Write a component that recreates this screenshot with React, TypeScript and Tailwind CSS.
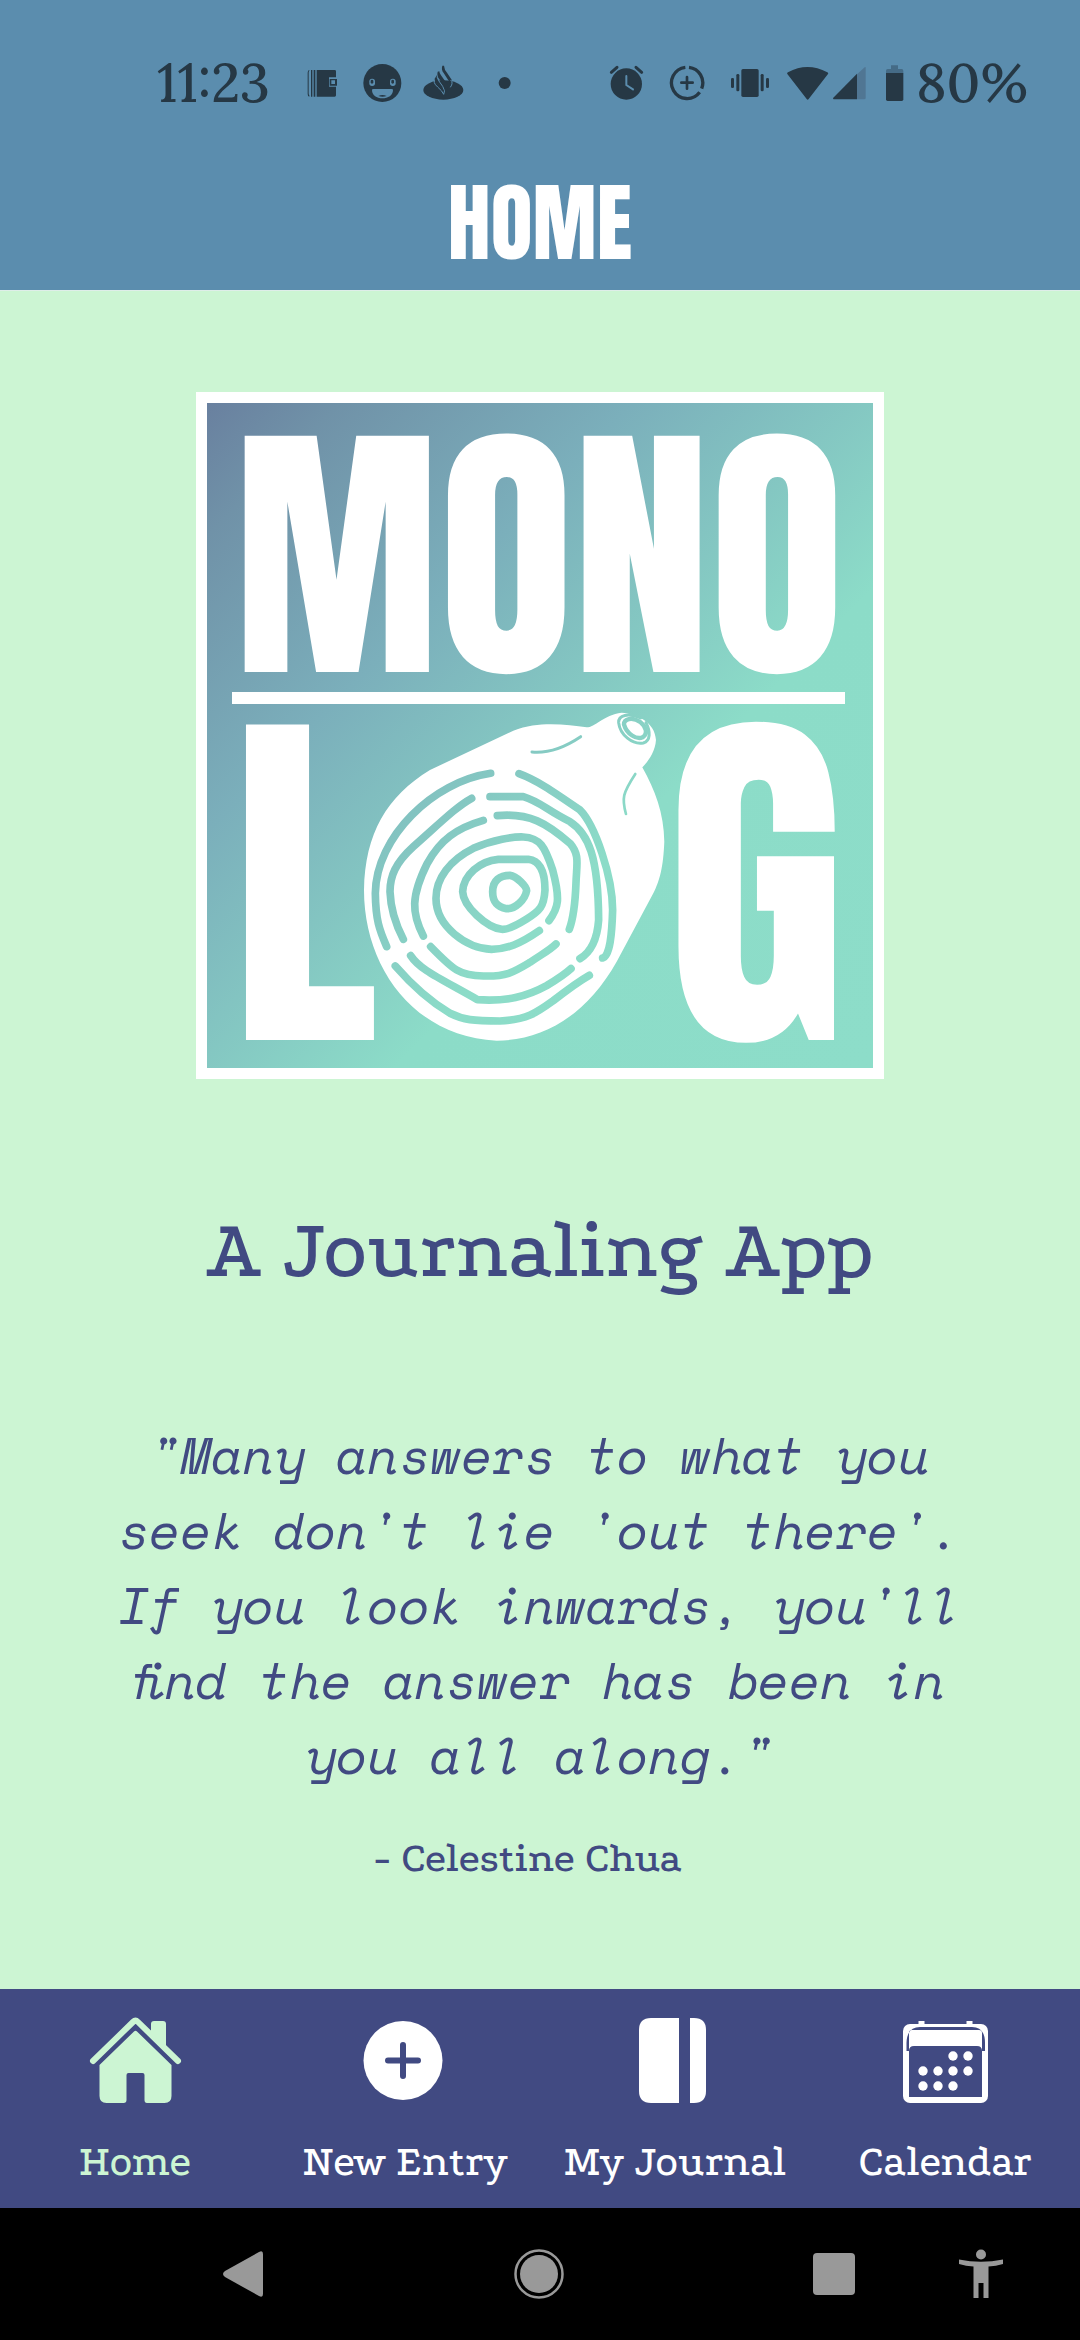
import type { ReactNode } from 'react';

const LABEL_FONT = "font-['Podkova','DejaVu_Serif',serif]";
const DARK = '#263845';
const BAR = '#5b8dae';

function StatusIcon({ box, className = 'w-10', children }: { box: string; className?: string; children: ReactNode }) {
  return (
    <svg viewBox={box} className={`h-10 shrink-0 ${className}`} fill={DARK} aria-hidden="true">
      {children}
    </svg>
  );
}

function StatusBar() {
  return (
    <div className="flex h-14 items-center justify-between pr-[52px] pl-[157px] font-['Lora','Liberation_Serif',serif] text-[54px] leading-14 font-medium text-[#263845]">
      <div className="flex items-center gap-5">
        <span className="mr-3">11:23</span>
        <StatusIcon box="522 69 120 120">
          <path d="M544 90q-5 0-5 8v64q0 8 5 8v-4q-2-1-2-6V98q0-5 2-6zM549 90h4v80h-4zM557 90h5v80h-5z" />
          <path d="M566 90h54q4 0 4 4v18h-21v28h21v26q0 4-4 4h-54z" />
          <path fillRule="evenodd" d="M605 117h22v20h-22zm5 4v11h11v-11z" />
        </StatusIcon>
        <StatusIcon box="702 69 120 120">
          <circle cx="763" cy="129" r="57" />
          <rect x="724" y="116" width="17" height="22" rx="8" fill={BAR} />
          <rect x="786" y="116" width="17" height="22" rx="8" fill={BAR} />
          <rect x="728" y="119" width="8" height="12" rx="4" />
          <rect x="790" y="119" width="8" height="12" rx="4" />
          <path fill={BAR} d="M732 150q0-3 4-3h55q4 0 4 3c0 16-15 25-32 25s-31-9-31-25z" />
          <path d="M751 168q12-6 25 0q-12 5-25 0z" />
        </StatusIcon>
        <StatusIcon box="882 69 126 120" className="w-[42px]">
          <ellipse cx="946" cy="150" rx="60" ry="29" />
          <path d="M919 118v10q2 6 10 13q14 12 18 22q7-9-3-24l-12-17q-7-10-3-20" stroke={BAR} strokeWidth="3" />
          <path d="M943 77q-4 12 4 22l13 20q9 11 7 23q8-9 4-23l-14-21q-8-9-9-21z" />
          <path d="M929 95q-3 13 5 23l12 17q6 10 5 24q12-15 6-28l-18-25q-5-6-5-12z" />
          <path d="M967 142q10-14 1-22" fill="none" stroke={BAR} strokeWidth="3" />
        </StatusIcon>
        <StatusIcon box="1066 69 120 120">
          <circle cx="1128" cy="129" r="18" />
        </StatusIcon>
      </div>
      <div className="flex items-center gap-5">
        <StatusIcon box="66 69 120 120">
          <circle cx="127" cy="132" r="47" />
          <path d="M82 97l17-15M173 97l-17-15" fill="none" stroke={DARK} strokeWidth="9" strokeLinecap="round" />
          <path d="M127 108v27l20 13" fill="none" stroke={BAR} strokeWidth="6" strokeLinecap="round" />
        </StatusIcon>
        <StatusIcon box="246 69 120 120">
          <path d="M304 82a47 47 0 1 0 43 75M315 82a47 47 0 0 1 38 64" fill="none" stroke={DARK} strokeWidth="10" />
          <path d="M309 111v35M292 128h34" fill="none" stroke={DARK} strokeWidth="8" strokeLinecap="round" />
        </StatusIcon>
        <StatusIcon box="426 69 132 120" className="w-11">
          <rect x="472" y="87" width="52" height="84" rx="5" />
          <rect x="457" y="102" width="9" height="52" rx="4" />
          <rect x="441" y="114" width="9" height="30" rx="4" />
          <rect x="530" y="102" width="9" height="52" rx="4" />
          <rect x="546" y="114" width="9" height="30" rx="4" />
        </StatusIcon>
        <StatusIcon box="612 69 246 120" className="-ml-1 w-[82px]">
          <path d="M616 102q-2-3 2-5q58-32 118 0q4 2 2 5l-58 75q-3 4-6 0z" />
          <path fill="#507693" d="M851 84q0-4-3-2l-23 21v75h22q4 0 4-4z" />
          <path d="M825 101l-71 72q-3 5 2 5h69z" />
        </StatusIcon>
        <StatusIcon box="912 69 60 120" className="-ml-1 w-5">
          <path fill="#456b86" d="M933 76h21v11h11q5 0 5 6v7h-52v-7q0-6 5-6h10z" />
          <path d="M918 99h52v79q0 5-5 5h-42q-5 0-5-5z" />
        </StatusIcon>
        <span className="-ml-2">80%</span>
      </div>
    </div>
  );
}

function Logo() {
  return (
    <svg viewBox="196 392 688 687" className="w-[688px] max-w-full" role="img" aria-label="Monolog">
      <defs>
        <linearGradient id="sky" gradientUnits="userSpaceOnUse" x1="207" y1="403" x2="873" y2="1068">
          <stop offset="0" stopColor="#69809f" />
          <stop offset="0.1" stopColor="#7092a8" />
          <stop offset="0.32" stopColor="#7bafbb" />
          <stop offset="0.64" stopColor="#8cdcc8" />
          <stop offset="1" stopColor="#8dddc9" />
        </linearGradient>
        <mask id="rings" maskUnits="userSpaceOnUse" x="0" y="0" width="1050" height="1110">
          <rect width="1050" height="1110" fill="#fff" />
          <g fill="none" stroke="#000" strokeWidth="23" strokeLinecap="round" strokeLinejoin="round">
            <path d="M452 250C280 275 108 440 106 610C107 690 118 720 140 770" />
            <path d="M395 325C350 350 310 390 220 470C165 520 150 560 150 605C152 660 165 700 190 748" />
            <path d="M430 391C350 414 300 450 262 520C212 620 215 670 250 738" />
            <path d="M598 722C540 762 500 778 455 778C380 775 288 710 288 625C288 565 330 510 400 475C460 448 520 440 550 441C600 443 615 470 638 540C662 630 655 655 627 692" />
            <path d="M475 508L565 508C600 512 615 545 615 600C612 650 600 662 560 687C520 712 500 720 485 718C440 712 370 650 368 605C370 555 420 513 475 508Z" />
            <path d="M510 556C530 558 560 590 560 602C555 630 525 658 500 656C470 650 458 635 458 605C458 570 480 556 510 556Z" />
            <path d="M472 377C570 368 620 400 690 460C720 495 710 520 708 580C705 660 698 690 688 718" />
            <path d="M450 320L550 320C600 335 620 360 690 395C745 430 775 500 776 690C772 745 755 785 720 806" />
            <path d="M537 251C590 270 640 305 720 360C765 405 818 560 818 660C816 730 810 800 788 804" />
            <path d="M272 770C340 840 360 858 430 858C500 860 520 847 570 817C610 790 630 780 648 762" />
            <path d="M212 797C240 840 300 865 412 929C500 935 560 920 620 887C660 863 680 848 693 836" />
            <path d="M166 828C220 890 280 940 330 970C370 990 400 993 480 993C560 990 590 968 640 932C690 893 720 872 748 856" />
          </g>
          <g fill="none" stroke="#000" strokeLinecap="round">
            <path d="M576 186C620 190 670 175 722 140" strokeWidth="9" />
            <path d="M886 252C848 310 845 325 858 372" strokeWidth="8" />
            <path d="M902 84C865 68 835 75 836 98C840 135 878 165 910 159C932 152 932 125 918 98" strokeWidth="9" />
            <path d="M902 97C875 78 852 88 852 103C860 132 890 150 908 142C925 132 918 110 902 97Z" strokeWidth="13" />
          </g>
        </mask>
      </defs>
      <rect x="196" y="392" width="688" height="687" fill="#fff" />
      <rect x="207" y="403" width="666" height="665" fill="url(#sky)" />
      <rect x="232" y="692" width="613" height="12" fill="#fff" />
      <g fill="#fff" className="font-['Anton','Roboto_Condensed',sans-serif]">
        <text x="539" y="672" textAnchor="middle" className="text-[275px]">MONO</text>
        <text x="232" y="1040" className="text-[367px]">L</text>
        <text x="667" y="1040" className="text-[367px]">G</text>
      </g>
      <g transform="translate(340 690) scale(0.3333)">
        <path
          mask="url(#rings)"
          fill="#fff"
          d="M845 68C890 72 945 95 948 150C946 190 915 225 907 232C945 300 972 370 973 455C970 530 960 570 940 610L830 815C740 975 610 1052 470 1052C220 1040 72 830 72 600C75 430 140 320 270 240L520 122C600 92 680 105 740 112C765 112 790 75 845 68Z"
        />
      </g>
    </svg>
  );
}

const tabs: { label: string; icon: ReactNode }[] = [
  {
    label: 'Home',
    icon: (
      <>
        <path d="M6 44L46 5q2.500-2.500 5 0L91 44" fill="none" stroke="currentColor" strokeWidth="6" strokeLinecap="round" />
        <path d="M64 16V7q0-3 3-3h9q3 0 3 3v23z" />
        <path d="M47 14.500q1.500-1.500 3 0L84.500 48v31q0 7-7 7H60q-2.500 0-2.500-3V58q0-2-2-2h-14q-2 0-2 2v25q0 3-3 3h-17q-7 0-7-7V48z" />
      </>
    ),
  },
  {
    label: 'New Entry',
    icon: (
      <>
        <circle cx="46" cy="43.500" r="39.500" />
        <path d="M46 28v31M31 43.500h30" stroke="#414a82" strokeWidth="6" strokeLinecap="round" />
      </>
    ),
  },
  {
    label: 'My Journal',
    icon: (
      <>
        <path d="M24 1h28v85H24q-12 0-12-12V13Q12 1 24 1z" />
        <path d="M63 1h4q12 0 12 12v61q0 12-12 12h-4z" />
      </>
    ),
  },
  {
    label: 'Calendar',
    icon: (
      <>
        <rect x="6" y="7" width="85" height="79" rx="7" />
        <path d="M21.500 4h6v4h-6zM69.500 4h6v4h-6z" />
        <g fill="#414a82">
          <path d="M12 80V34q0-5 5-5h63q5 0 5 5v46z" />
          <path d="M9.500 34V26Q10 10 23 10h52q13 0 13 16v8h-3V16q0-3-3-3H15q-3 0-3 3v18z" />
        </g>
        {[[56, 39], [71, 39], [26, 54], [41, 54], [56, 54], [71, 54], [26, 69], [41, 69], [56, 69]].map(([x, y]) => (
          <circle key={`${x}-${y}`} cx={x} cy={y} r="4.700" />
        ))}
      </>
    ),
  },
];

function TabBar() {
  return (
    <nav className="grid h-[219px] shrink-0 grid-cols-4 bg-[#414a82] pt-7">
      {tabs.map(({ label, icon }) => (
        <a
          key={label}
          href="#"
          aria-current={label === 'Home' ? 'page' : undefined}
          className={`flex flex-col items-center gap-8 text-white aria-[current=page]:text-[#ccf5d3] ${LABEL_FONT}`}
        >
          <svg viewBox="0 0 96 88" className="h-[88px] w-24" fill="currentColor" aria-hidden="true">
            {icon}
          </svg>
          <span className="text-[43px] leading-[50px] font-medium whitespace-nowrap">{label}</span>
        </a>
      ))}
    </nav>
  );
}

function SystemBar() {
  return (
    <div className="flex h-[132px] shrink-0 items-center bg-black pr-[76px] pl-[222px]">
      <div className="flex flex-1 items-center justify-between">
        <button type="button" aria-label="Back">
          <svg viewBox="0 0 42 48" className="h-12 w-[42px]" fill="#999">
            <path d="M3 21L37 2q4-2 4 2v40q0 4-4 2L3 27q-4-3 0-6z" />
          </svg>
        </button>
        <button type="button" aria-label="Home screen">
          <svg viewBox="0 0 50 50" className="size-[50px]" fill="#999">
            <circle cx="25" cy="25" r="19" />
            <circle cx="25" cy="25" r="23.500" fill="none" stroke="#999" strokeWidth="2.500" />
          </svg>
        </button>
        <button type="button" aria-label="Recent apps">
          <svg viewBox="0 0 42 42" className="size-[42px]" fill="#999">
            <rect width="42" height="42" rx="4" />
          </svg>
        </button>
      </div>
      <button type="button" aria-label="Accessibility" className="ml-[103px]">
        <svg viewBox="0 0 46 50" className="h-[50px] w-[46px]" fill="#999">
          <circle cx="23" cy="5.500" r="5" />
          <path d="M1 10.500Q23 15 45 10.500V15q-7 2-14.500 2.500V49h-5V34h-5v15h-5V17.500Q8 17 1 15z" />
        </svg>
      </button>
    </div>
  );
}

export default function App() {
  return (
    <div className="flex min-h-screen flex-col bg-[#ccf5d3] text-[#414a82]">
      <header className="h-[291px] shrink-0 border-b border-[#dfeee9] bg-[#5b8dae] pt-[55px]">
        <StatusBar />
        <h1 className="mt-12 text-center font-['Anton','Roboto_Condensed',sans-serif] text-[86px] leading-[128px] font-normal text-white">
          HOME
        </h1>
      </header>
      <main className="flex flex-1 flex-col items-center px-24 pt-[101px]">
        <Logo />
        <h2 className={`mt-[122px] text-[84px] leading-[100px] font-medium ${LABEL_FONT}`}>A Journaling App</h2>
        <figure className="mt-[116px] text-center">
          <blockquote className="font-['Space_Mono','Liberation_Mono',monospace] text-[51px] leading-[75px] italic">
            "Many answers to what you seek don't lie 'out there'. If you look inwards, you'll find the answer has been in you
            all along."
          </blockquote>
          <figcaption className={`mt-[42px] pr-6 text-[42px] leading-12 font-medium ${LABEL_FONT}`}>- Celestine Chua</figcaption>
        </figure>
      </main>
      <TabBar />
      <SystemBar />
    </div>
  );
}
